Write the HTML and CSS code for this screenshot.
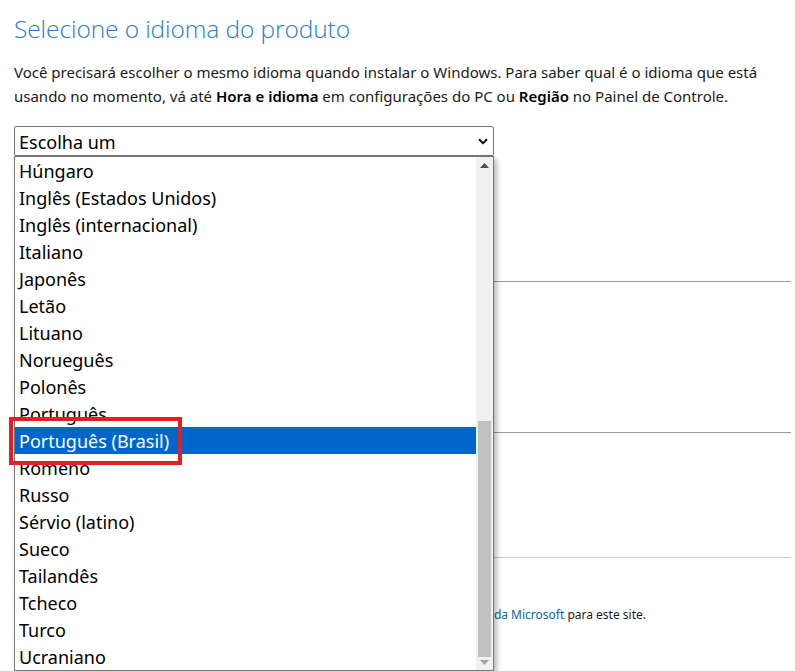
FILE: index.html
```html
<!DOCTYPE html>
<html lang="pt-BR">
<head>
<meta charset="utf-8">
<title>Selecione o idioma do produto</title>
<link rel="stylesheet" href="styles.css">
</head>
<body>
<main class="page">
  <h1 class="title">Selecione o idioma do produto</h1>
  <p class="intro">Você precisará escolher o mesmo idioma quando instalar o Windows. Para saber qual é o idioma que está usando no momento, vá até <b>Hora e idioma</b> em configurações do PC ou <b>Região</b> no Painel de Controle.</p>

  <div class="picker">
    <div class="select">
      <span>Escolha um</span>
      <svg class="chevron" width="10" height="7" viewBox="0 0 10 7"><path d="M1 1.2 L5 5.2 L9 1.2" fill="none" stroke="#111" stroke-width="2"/></svg>
    </div>
    <div class="dropdown">
      <ul class="options">
        <li>Húngaro</li>
        <li>Inglês (Estados Unidos)</li>
        <li>Inglês (internacional)</li>
        <li>Italiano</li>
        <li>Japonês</li>
        <li>Letão</li>
        <li>Lituano</li>
        <li>Norueguês</li>
        <li>Polonês</li>
        <li>Português</li>
        <li class="selected">Português (Brasil)</li>
        <li>Romeno</li>
        <li>Russo</li>
        <li>Sérvio (latino)</li>
        <li>Sueco</li>
        <li>Tailandês</li>
        <li>Tcheco</li>
        <li>Turco</li>
        <li>Ucraniano</li>
      </ul>
      <div class="scrollbar">
        <svg class="arrow" width="9" height="5" viewBox="0 0 9 5"><path d="M0 5 L4.5 0 L9 5 Z" fill="#505050"/></svg>
        <div class="track"><div class="thumb"></div></div>
        <svg class="arrow" width="9" height="5" viewBox="0 0 9 5"><path d="M0 0 L4.5 5 L9 0 Z" fill="#a3a3a3"/></svg>
      </div>
    </div>
  </div>

  <div class="section s1"></div>
  <div class="section s2"></div>
  <div class="section s3">
    <p class="privacy">Para obter mais informações, consulte a Declaração de Privacidade <a href="#">da Microsoft</a> para este site.</p>
  </div>

  <div class="highlight-box"></div>
</main>
</body>
</html>
```

FILE: styles.css
```css
* { box-sizing: border-box; }

html, body {
  margin: 0;
  background: #fff;
}

body {
  font-family: "Noto Sans", "Open Sans", "Liberation Sans", sans-serif;
  color: #1a1a1a;
  width: 795px;
  height: 671px;
  overflow: hidden;
}

.page {
  position: relative;
  padding: 12px 4px 0 14px;
}

.title {
  margin: 0 0 14px;
  font-family: "Open Sans", "Noto Sans", sans-serif;
  font-weight: 300;
  font-size: 24.5px;
  line-height: 34px;
  color: #1f7cd0;
  letter-spacing: -0.1px;
}

.intro {
  margin: 0 0 18px;
  font-size: 15px;
  line-height: 24px;
  color: #1a1a1a;
  max-width: 765px;
}

.intro b {
  font-weight: 600;
  color: #000;
}

.picker {
  position: relative;
  width: 480px;
}

.select {
  height: 30px;
  border: 1px solid #767676;
  border-radius: 2px;
  display: flex;
  align-items: center;
  justify-content: space-between;
  padding: 1px 5px 0 4px;
  font-size: 18px;
  color: #000;
}

.chevron { display: block; }

.dropdown {
  position: absolute;
  top: 30px;
  left: 0;
  width: 480px;
  height: 515px;
  border: 1px solid #767676;
  background: #fff;
  display: flex;
  box-shadow: 3px 3px 5px rgba(0, 0, 0, 0.28);
  z-index: 2;
}

.options {
  list-style: none;
  margin: 0;
  padding: 0;
  flex: 1;
}

.options li {
  height: 27px;
  line-height: 26px;
  padding: 1px 0 0 4px;
  font-size: 18px;
  color: #000;
  white-space: nowrap;
}

.options li.selected {
  background: #0066cc;
  color: #fff;
}

.scrollbar {
  width: 17px;
  background: #f0f0f0;
  display: flex;
  flex-direction: column;
  align-items: center;
  padding: 6px 0 5px;
}

.arrow { display: block; flex: none; }

.track {
  flex: 1;
  width: 100%;
  display: flex;
  flex-direction: column;
  justify-content: flex-end;
  padding: 0 2px 3px;
}

.thumb {
  height: 236px;
  background: #c1c1c1;
}

.section {
  border-bottom: 1px solid #9a9a9a;
}

.s1 { height: 126px; }
.s2 { height: 151px; }
.s3 {
  border-bottom: 0;
  border-top: 1px solid #cccccc;
  margin-top: 124px;
  padding-top: 48px;
}

.privacy {
  margin: 0;
  width: 632px;
  text-align: right;
  font-size: 12px;
  line-height: 18px;
  color: #1a1a1a;
  white-space: nowrap;
  overflow: hidden;
}

.privacy a {
  color: #0067b8;
  text-decoration: none;
}

.highlight-box {
  position: absolute;
  left: 9px;
  top: 417px;
  width: 173px;
  height: 48px;
  border: 4px solid #e81c24;
  z-index: 3;
}
```
